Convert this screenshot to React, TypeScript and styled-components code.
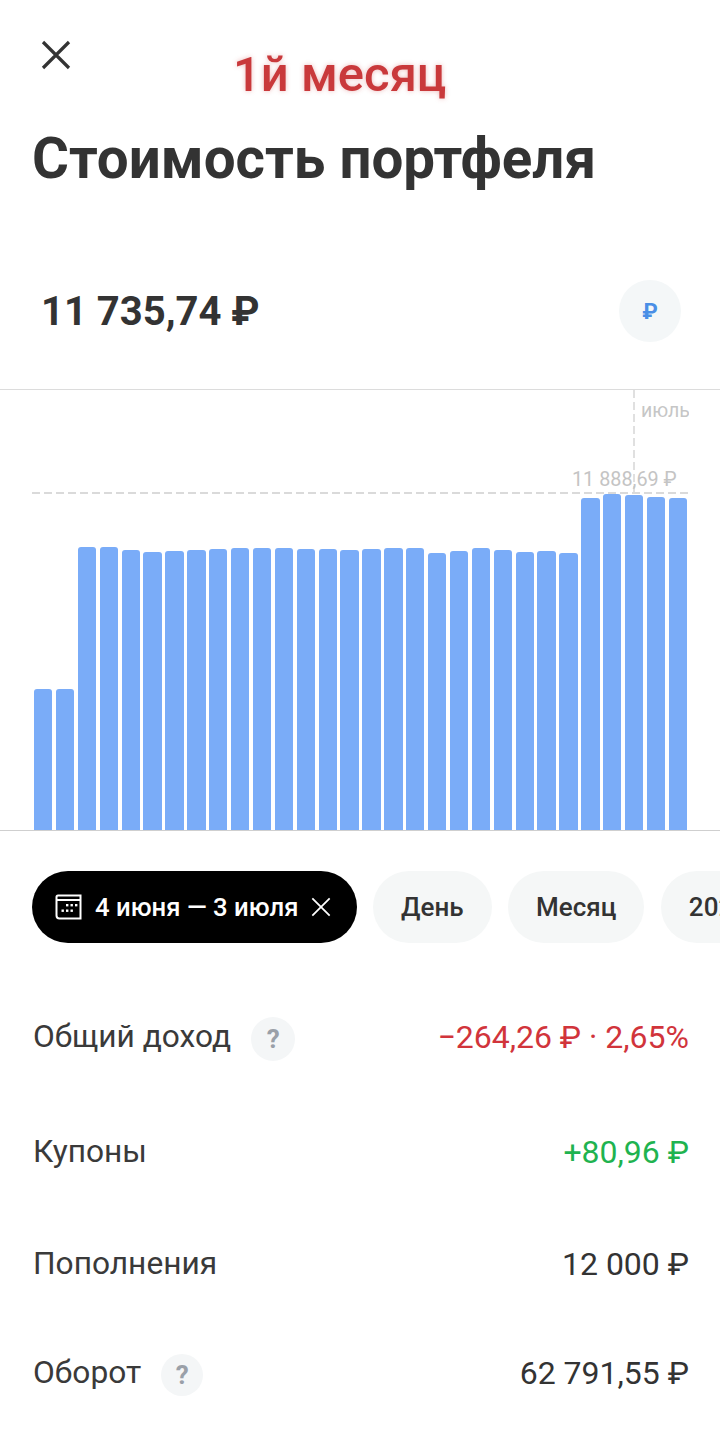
import styled, { createGlobalStyle } from "styled-components";

const barTops = [
    689, 689, 547, 547, 550, 552, 551, 550, 549, 548, 548, 548, 549, 549, 550,
    549, 548, 548, 553, 551, 548, 550, 552, 551, 553, 498, 494, 495, 497, 498,
];
const CHART_BOTTOM = 830;

const rows = [
    { label: "Общий доход", value: "−264,26 ₽ · 2,65%", color: "#d1343b", height: 115, hint: 44 },
    { label: "Купоны", value: "+80,96 ₽", color: "#1fb350", height: 115 },
    { label: "Пополнения", value: "12 000 ₽", color: "#333333", height: 109 },
    { label: "Оборот", value: "62 791,55 ₽", color: "#333333", height: 109, hint: 42 },
];

const CloseIcon = ({ size, color, width }: { size: number; color: string; width: number }) => (
    <svg width={size} height={size} viewBox="0 0 30 30" fill="none">
        <path d="M2 2 L28 28 M28 2 L2 28" stroke={color} strokeWidth={width} />
    </svg>
);

const CalendarIcon = () => (
    <svg width="28" height="26" viewBox="0 0 28 26" fill="none">
        <path d="M3 1.5 H25.5 V24.5 H4.5 Q1.5 24.5 1.5 21.5 V3 Q1.5 1.5 3 1.5 Z" stroke="#fff" strokeWidth="2" />
        <path d="M2 6 H25" stroke="#fff" strokeWidth="2" />
        <g fill="#fff">
            <rect x="11" y="10" width="2.4" height="2.4" />
            <rect x="15.5" y="10" width="2.4" height="2.4" />
            <rect x="20" y="10" width="2.4" height="2.4" />
            <rect x="6.5" y="15.5" width="2.4" height="2.4" />
            <rect x="11" y="15.5" width="2.4" height="2.4" />
            <rect x="15.5" y="15.5" width="2.4" height="2.4" />
        </g>
    </svg>
);

export default function App() {
    return (
        <Page>
            <GlobalStyle />
            <Note>1й месяц</Note>
            <TopBar>
                <CloseIcon size={30} color="#333" width={3.2} />
            </TopBar>
            <Title>Стоимость портфеля</Title>
            <BalanceRow>
                <Balance>11 735,74 ₽</Balance>
                <CurrencyButton>₽</CurrencyButton>
            </BalanceRow>
            <Chart>
                <MonthLine />
                <MonthLabel>июль</MonthLabel>
                <MaxLine />
                <MaxLabel>11 888,69 ₽</MaxLabel>
                {barTops.map((top, i) => (
                    <Bar key={i} style={{ height: CHART_BOTTOM - top }} />
                ))}
            </Chart>
            <Chips>
                <ActiveChip>
                    <CalendarIcon />
                    <span>4 июня — 3 июля</span>
                    <CloseIcon size={20} color="#fff" width={2.6} />
                </ActiveChip>
                <Chip>День</Chip>
                <Chip>Месяц</Chip>
                <Chip>2023</Chip>
            </Chips>
            <StatList>
                {rows.map((row) => (
                    <StatRow key={row.label} $height={row.height}>
                        <StatLabel>{row.label}</StatLabel>
                        {row.hint && <Hint $size={row.hint}>?</Hint>}
                        <StatValue $color={row.color}>{row.value}</StatValue>
                    </StatRow>
                ))}
            </StatList>
        </Page>
    );
}

const GlobalStyle = createGlobalStyle`
    html, body {
        margin: 0;
        padding: 0;
        background: #fff;
    }
    * {
        box-sizing: border-box;
    }
`;

const Page = styled.div`
    position: relative;
    width: 720px;
    height: 1456px;
    overflow: hidden;
    background: #fff;
    font-family: Roboto, "Liberation Sans", sans-serif;
    color: #333;
`;

const Note = styled.div`
    position: absolute;
    left: 233px;
    top: 47px;
    font-size: 49px;
    line-height: 56px;
    font-weight: 500;
    color: #c9393b;
    text-shadow: 0 0 5px rgba(200, 60, 60, 0.35);
`;

const TopBar = styled.div`
    height: 128px;
    padding: 40px 0 0 41px;
`;

const Title = styled.h1`
    margin: 0;
    height: 105px;
    padding: 1px 0 0 32px;
    font-size: 56.5px;
    line-height: 60px;
    font-weight: 700;
    color: #333;
`;

const BalanceRow = styled.div`
    height: 157px;
    padding: 0 39px 0 41px;
    display: flex;
    align-items: center;
    justify-content: space-between;
    border-bottom: 1.5px solid #dcdcdc;
`;

const Balance = styled.div`
    font-size: 40px;
    font-weight: 700;
    color: #333;
`;

const CurrencyButton = styled.div`
    width: 62px;
    height: 62px;
    border-radius: 50%;
    background: #f4f7f8;
    color: #4a8fe6;
    font-size: 22px;
    font-weight: 700;
    display: flex;
    align-items: center;
    justify-content: center;
`;

const Chart = styled.div`
    position: relative;
    height: 441px;
    padding-left: 34px;
    display: flex;
    align-items: flex-end;
    gap: 3.6px;
    border-bottom: 1px solid #cfcfcf;
`;

const Bar = styled.div`
    width: 18.3px;
    flex: none;
    background: #7aacf8;
    border-radius: 3px 3px 0 0;
`;

const MonthLine = styled.div`
    position: absolute;
    left: 633px;
    top: 0;
    width: 1.5px;
    height: 102px;
    background: repeating-linear-gradient(to bottom, #e0e0e0 0 8px, transparent 8px 12px);
`;

const MonthLabel = styled.div`
    position: absolute;
    left: 641px;
    top: 10px;
    width: 48px;
    overflow: hidden;
    font-size: 19.5px;
    line-height: 22px;
    color: #c6c6c6;
`;

const MaxLine = styled.div`
    position: absolute;
    left: 32px;
    width: 656px;
    top: 102px;
    height: 1.5px;
    background: repeating-linear-gradient(to right, #dadada 0 8px, transparent 8px 12px);
`;

const MaxLabel = styled.div`
    position: absolute;
    left: 572px;
    top: 78px;
    font-size: 19.8px;
    line-height: 24px;
    color: #c4c4c4;
    white-space: nowrap;
`;

const Chips = styled.div`
    display: flex;
    gap: 16.5px;
    padding: 40px 0 0 32px;
    overflow: hidden;
`;

const Chip = styled.div`
    height: 72px;
    flex: none;
    padding: 0 28px;
    border-radius: 36px;
    background: #f5f7f7;
    display: flex;
    align-items: center;
    font-size: 26px;
    font-weight: 500;
    color: #333;
`;

const ActiveChip = styled(Chip)`
    width: 324.5px;
    padding: 0 26px 0 23px;
    gap: 10px;
    background: #000;
    color: #fff;
    font-size: 25.7px;
    justify-content: space-between;
`;

const StatList = styled.div`
    padding: 36px 31px 0 33px;
`;

const StatRow = styled.div<{ $height: number }>`
    height: ${({ $height }) => $height}px;
    display: flex;
    align-items: center;
    gap: 20px;
`;

const StatLabel = styled.div`
    font-size: 31.7px;
    color: #3a3a3a;
`;

const Hint = styled.div<{ $size: number }>`
    width: ${({ $size }) => $size}px;
    height: ${({ $size }) => $size}px;
    margin-top: 5px;
    border-radius: 50%;
    background: #f4f6f7;
    color: #9aa0a8;
    font-size: 26px;
    font-weight: 700;
    display: flex;
    align-items: center;
    justify-content: center;
`;

const StatValue = styled.div<{ $color: string }>`
    margin-left: auto;
    font-size: 32px;
    color: ${({ $color }) => $color};
`;
